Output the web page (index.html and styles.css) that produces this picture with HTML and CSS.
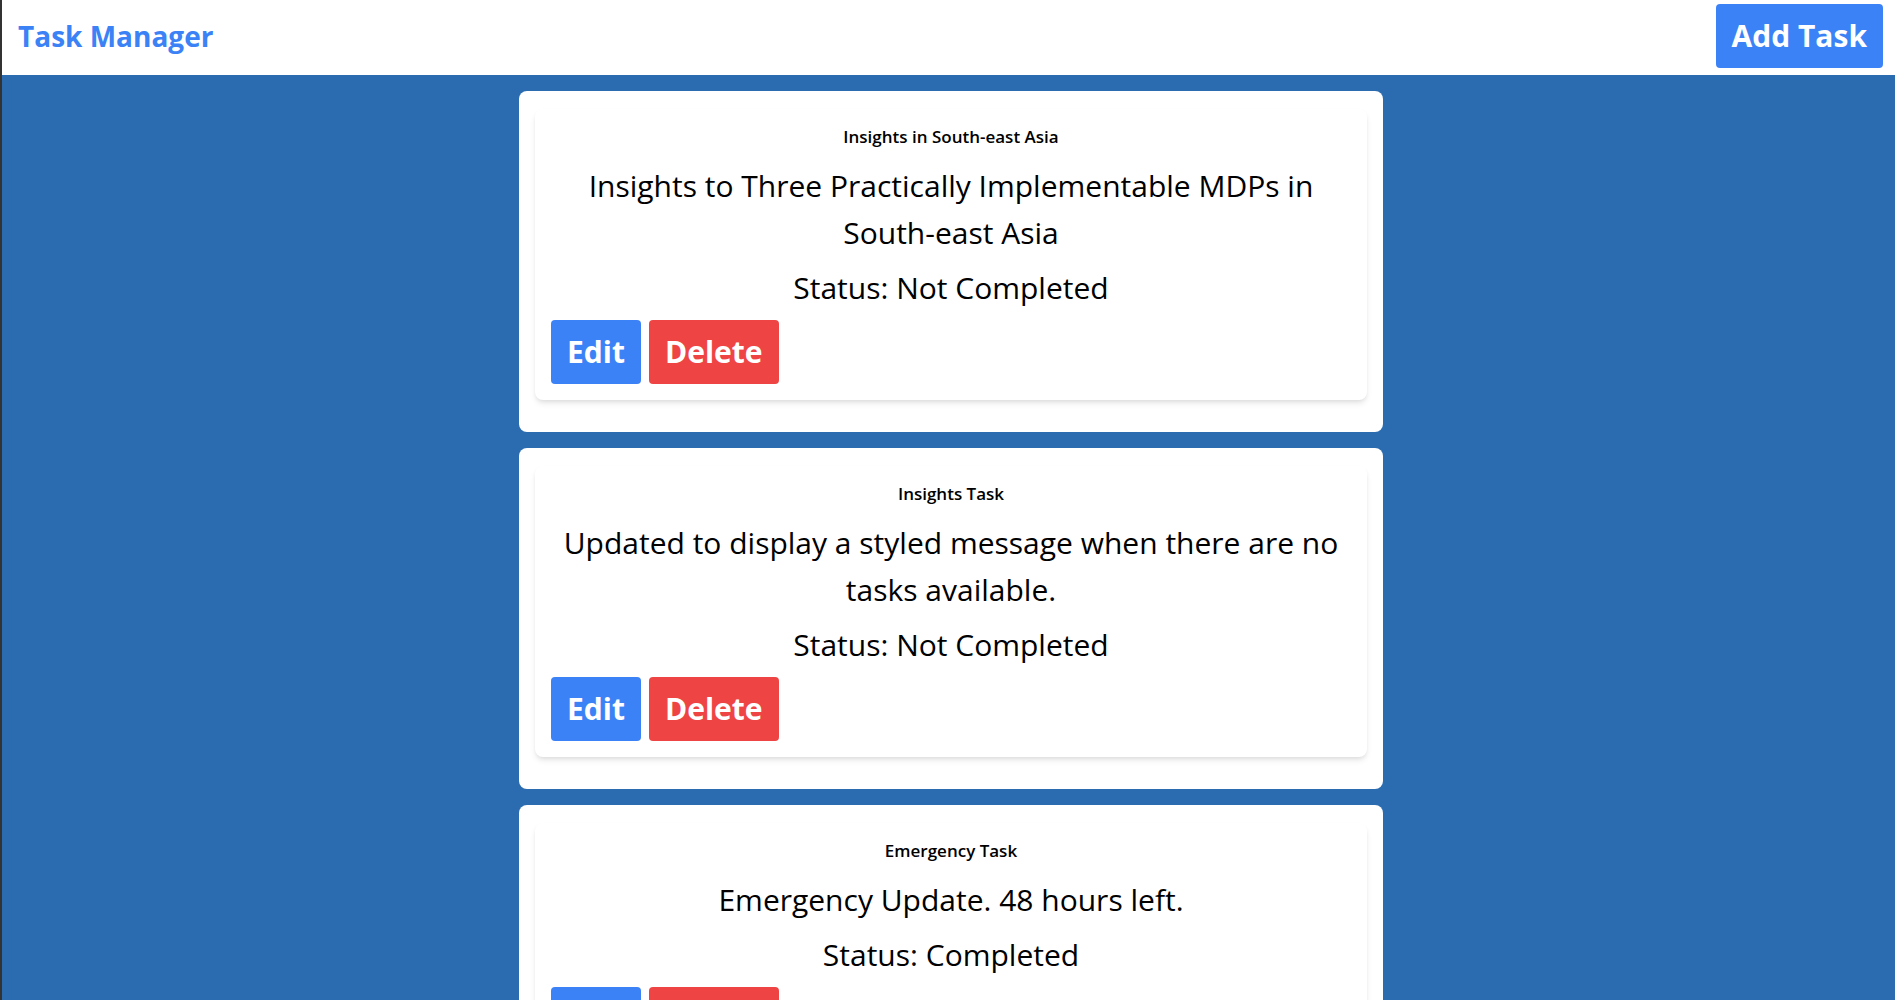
FILE: index.html
```html
<!DOCTYPE html>
<html lang="en">
<head>
<meta charset="utf-8">
<title>Task Manager</title>
<link rel="stylesheet" href="styles.css">
</head>
<body>
<header class="topbar">
  <h1 class="brand">Task Manager</h1>
  <button class="btn btn-blue">Add Task</button>
</header>
<main class="task-list">
  <section class="task-wrap">
    <div class="task-card">
      <h3 class="task-label">Insights in South-east Asia</h3>
      <p class="task-title">Insights to Three Practically Implementable MDPs in South-east Asia</p>
      <p class="task-status">Status: Not Completed</p>
      <div class="task-actions">
        <button class="btn btn-blue">Edit</button>
        <button class="btn btn-red">Delete</button>
      </div>
    </div>
  </section>
  <section class="task-wrap">
    <div class="task-card">
      <h3 class="task-label">Insights Task</h3>
      <p class="task-title">Updated to display a styled message when there are no tasks available.</p>
      <p class="task-status">Status: Not Completed</p>
      <div class="task-actions">
        <button class="btn btn-blue">Edit</button>
        <button class="btn btn-red">Delete</button>
      </div>
    </div>
  </section>
  <section class="task-wrap">
    <div class="task-card">
      <h3 class="task-label">Emergency Task</h3>
      <p class="task-title">Emergency Update. 48 hours left.</p>
      <p class="task-status">Status: Completed</p>
      <div class="task-actions">
        <button class="btn btn-blue">Edit</button>
        <button class="btn btn-red">Delete</button>
      </div>
    </div>
  </section>
</main>
</body>
</html>
```
FILE: styles.css
```css
html, body {
  margin: 0;
  padding: 0;
}
body {
  font-family: "Segoe UI", "Open Sans", sans-serif;
  background: #2b6cb0;
  border-left: 2px solid #333333;
  min-height: 100vh;
  box-sizing: border-box;
  color: #000;
}
.topbar {
  height: 75px;
  background: #ffffff;
  display: flex;
  align-items: center;
  justify-content: space-between;
  padding: 0 12px 4px 16px;
  box-sizing: border-box;
}
.brand {
  margin: 0;
  color: #3b82f6;
  font-size: 28px;
  font-weight: 700;
  line-height: 36px;
}
.btn {
  font-family: inherit;
  font-size: 30px;
  font-weight: 700;
  color: #ffffff;
  border: none;
  border-radius: 4px;
  height: 64px;
  padding: 0 16px;
  line-height: 36px;
  cursor: pointer;
}
.btn-blue { background: #3b82f6; }
.btn-red { background: #ef4444; }
.task-list {
  display: flex;
  flex-direction: column;
  align-items: center;
  gap: 16px;
  padding: 16px 0 16px 5px;
}
.task-wrap {
  width: 864px;
  box-sizing: border-box;
  background: #ffffff;
  border-radius: 8px;
  padding: 18px 16px 32px;
}
.task-card {
  background: #ffffff;
  border-radius: 8px;
  box-shadow: 0 4px 6px -1px rgba(0,0,0,0.1), 0 2px 4px -1px rgba(0,0,0,0.06);
  padding: 16px;
  text-align: center;
}
.task-label {
  margin: 0;
  font-size: 17px;
  font-weight: 600;
  line-height: 24px;
}
.task-title {
  margin: 13px 0 0;
  font-size: 30px;
  line-height: 47px;
}
.task-status {
  margin: 12px 0 0;
  font-size: 30px;
  line-height: 40px;
}
.task-actions {
  margin-top: 12px;
  display: flex;
  gap: 8px;
}
```
